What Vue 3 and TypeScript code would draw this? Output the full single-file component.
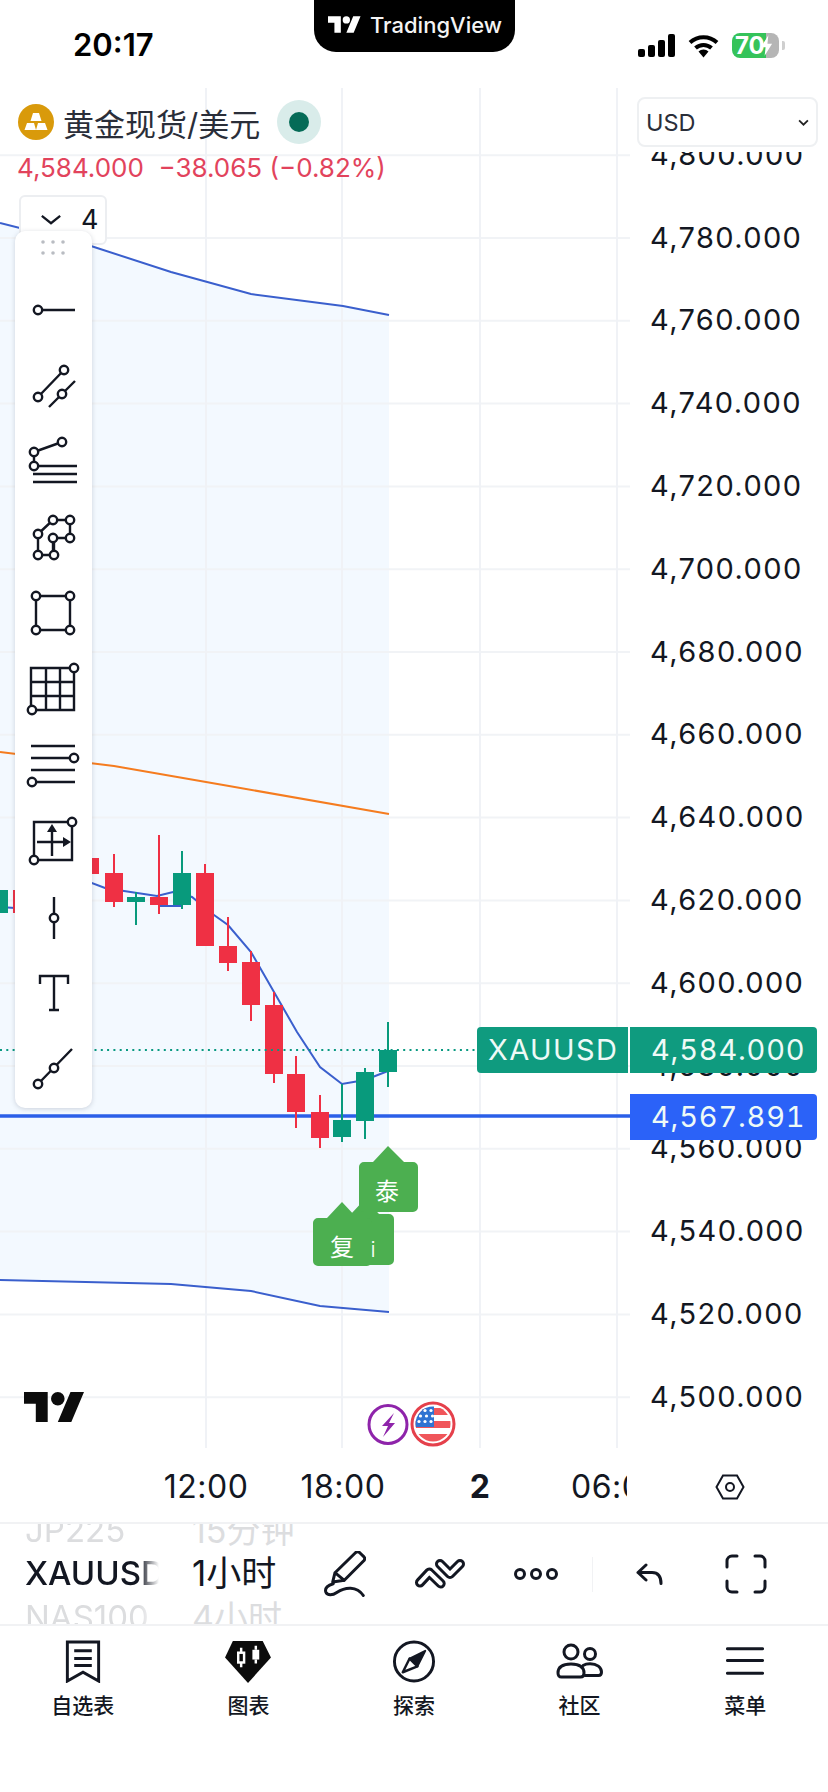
<template>
  <div class="screen">
    <header class="status">
      <span class="status__time">20:17</span>
      <div class="status__pill">
        <svg class="status__logo" viewBox="0 0 36 18"><path d="M14 18H7V7H0V0h14zM28 18h-8L27.500 0h8z" /><circle cx="20" cy="4" r="4" /></svg>
        <span>TradingView</span>
      </div>
      <div class="status__icons">
        <svg class="status__signal" viewBox="0 0 37 24">
          <rect x="0" y="15" width="7" height="8" rx="2" />
          <rect x="10" y="11" width="7" height="12" rx="2" />
          <rect x="20" y="6" width="7" height="17" rx="2" />
          <rect x="30" y="0" width="7" height="23" rx="2" />
        </svg>
        <svg class="status__wifi" viewBox="0 0 31 24">
          <path d="M2 8.500a20 20 0 0 1 27 0M7.500 14a12 12 0 0 1 16 0" fill="none" stroke="#000" stroke-width="4" />
          <path d="M15.500 23.500l-5-6a7.500 7.500 0 0 1 10 0z" />
        </svg>
        <div class="battery">
          <span>70</span>
          <svg class="battery__bolt" viewBox="0 0 14 24"><path d="M9 1L1 14h5l-1 9 8-13H8z" /></svg>
        </div>
        <i class="battery__nub"></i>
      </div>
    </header>

    <section class="chart">
      <div class="chart__main">
        <svg class="plot" viewBox="0 85 828 1363">
          <polygon :points="bandArea" fill="#f3f9ff" />
          <path v-for="y in gridY" :key="y" :d="`M0 ${y}H630`" stroke="#f1f3f6" stroke-width="2" />
          <path v-for="x in gridX" :key="x" :d="`M${x} 88V1448`" stroke="#f0f2f6" stroke-width="2" />
          <polyline :points="upperBand" class="line line--blue" />
          <polyline :points="lowerBand" class="line line--blue" />
          <polyline :points="midBand" class="line line--orange" />
          <polyline :points="average" class="line line--blue" />
          <path d="M160 906H182" class="line line--blue" />
          <path d="M0 1116H630" stroke="#2b5fe8" stroke-width="3.500" />
          <g v-for="c in candles" :key="c.x" :fill="c.color">
            <rect :x="c.x - 1" :y="c.wickTop" width="2" :height="c.wickBottom - c.wickTop" />
            <rect :x="c.x - 9" :y="c.top" width="18" :height="c.bottom - c.top" />
          </g>
          <path d="M0 1050H480" stroke="#089981" stroke-width="2" stroke-dasharray="2 4.300" />

          <path class="marker" d="M365 1199l-14 15h-16a5 5 0 0 0-5 5v41a5 5 0 0 0 5 5h54a5 5 0 0 0 5-5v-41a5 5 0 0 0-5-5h-10z" />
          <path class="marker" d="M342 1202l-15 16h-9a5 5 0 0 0-5 5v38a5 5 0 0 0 5 5h49a5 5 0 0 0 5-5v-38a5 5 0 0 0-5-5h-10z" />
          <path class="marker" d="M388 1146l-15 16h-9a5 5 0 0 0-5 5v40a5 5 0 0 0 5 5h49a5 5 0 0 0 5-5v-40a5 5 0 0 0-5-5h-9z" />
          <text class="marker__text" x="387" y="1200">泰</text>
          <text class="marker__text" x="342" y="1256">复</text>
          <text class="marker__text marker__text--thin" x="373" y="1257">i</text>

          <path class="watermark" d="M47.700 1422H35.800V1403.700H24V1392H47.700zM70.500 1392H84L71.300 1422H57.800z" />
          <circle class="watermark" cx="57.800" cy="1398.700" r="6.800" />

          <circle cx="388" cy="1424.500" r="19" fill="#fff" stroke="#8e24aa" stroke-width="3" />
          <path d="M394 1413l-12 13h6l-5 11 12-14h-6z" fill="#8e24aa" />
          <clipPath id="flag"><circle cx="433" cy="1424" r="17.500" /></clipPath>
          <circle cx="433" cy="1424" r="21" fill="#fff" stroke="#e5404b" stroke-width="3" />
          <g clip-path="url(#flag)">
            <rect x="415" y="1406" width="36" height="36" fill="#fff" />
            <rect x="415" y="1408" width="36" height="7" fill="#f0555a" />
            <rect x="415" y="1421" width="36" height="7" fill="#f0555a" />
            <rect x="415" y="1434" width="36" height="9" fill="#f0555a" />
            <rect x="415" y="1406" width="19" height="21" fill="#2f73d2" />
            <circle v-for="s in flagStars" :key="s.x + '-' + s.y" :cx="s.x" :cy="s.y" r="1.600" fill="#fff" />
          </g>
        </svg>

        <div class="legend">
          <div class="legend__title">
            <svg class="legend__coin" viewBox="0 0 36 36">
              <circle cx="18" cy="18" r="18" fill="#d99a0b" />
              <path d="M15 9h6l2.500 8h-11zM9 19h7l2 7H6.500zM20 19h7l2.500 7H18z" fill="#fff" />
            </svg>
            <span class="legend__name">黄金现货/美元</span>
            <span class="legend__dot"><i></i></span>
          </div>
          <div class="legend__quote">4,584.000&nbsp;&nbsp;−38.065 (−0.82%)</div>
        </div>

        <button class="collapse">
          <svg viewBox="0 0 24 12"><path d="M2 2l10 8 10-8" fill="none" stroke="#131722" stroke-width="2.500" /></svg>
          <span>4</span>
        </button>

        <aside class="tools">
          <svg viewBox="15 231 77 877">
            <g fill="#b9bcc2">
              <template v-for="y in [242, 253]" :key="y">
                <circle cx="43" :cy="y" r="1.800" />
                <circle cx="53" :cy="y" r="1.800" />
                <circle cx="63" :cy="y" r="1.800" />
              </template>
            </g>
            <path class="tools__line" :d="toolLines" />
            <path class="tools__head" d="M52 824l-5 8h10zM71 842l-8-5v10z" />
            <circle v-for="n in toolNodes" :key="n[0] + '-' + n[1]" class="tools__node" :cx="n[0]" :cy="n[1]" r="4.200" />
          </svg>
        </aside>

        <div class="price-axis">
          <span v-for="p in prices" :key="p">{{ p }}</span>
        </div>

        <div class="select">
          <span>USD</span>
          <svg viewBox="0 0 10 6"><path d="M1 1l4 4 4-4" fill="none" stroke="#222" stroke-width="1.600" /></svg>
        </div>

        <div class="tag tag--last">
          <span class="tag__symbol">XAUUSD</span>
          <span class="tag__price">4,584.000</span>
        </div>
        <div class="tag tag--line">
          <span class="tag__price">4,567.891</span>
        </div>
      </div>

      <div class="time-axis">
        <div class="time-axis__labels">
          <span>12:00</span>
          <span>18:00</span>
          <span class="is-bold">2</span>
          <span>06:00</span>
        </div>
        <div class="time-axis__settings">
          <svg viewBox="0 0 30 26"><path d="M8 1.500h14L28.500 13 22 24.500H8L1.500 13z" fill="none" stroke="#131722" stroke-width="2" /><circle cx="15" cy="13" r="4" fill="none" stroke="#131722" stroke-width="2" /></svg>
        </div>
      </div>
    </section>

    <section class="bar">
      <div class="picker picker--symbol">
        <span>JP225</span>
        <span class="is-current">XAUUSD</span>
        <span>NAS100</span>
      </div>
      <div class="picker picker--interval">
        <span>15分钟</span>
        <span class="is-current">1小时</span>
        <span>4小时</span>
      </div>
      <div class="bar__slot">
        <svg width="42" height="46" viewBox="0 0 42 46" class="icon">
          <path d="M11 21.700L31.700 1.500a3 3 0 0 1 3.800 0l4.500 4.300a3 3 0 0 1 0 3.700L20.300 29.300 8.700 31zM11 21.700l9.300 7.600" />
          <path d="M9.300 32.700C4 34 .5 37 1.800 41c1.500 4 7 3.300 11 .5 8-5.500 20-7 26.500 3" />
        </svg>
      </div>
      <div class="bar__slot">
        <svg width="50" height="30" viewBox="0 0 50 30">
          <path d="M5 23.500l9.300-10 11.400 11M25 5l10 10L45 5" fill="none" stroke="#131722" stroke-width="10" stroke-linecap="round" stroke-linejoin="round" />
          <path d="M5 23.500l9.300-10 11.400 11M25 5l10 10L45 5" fill="none" stroke="#fff" stroke-width="4" stroke-linecap="round" stroke-linejoin="round" />
        </svg>
      </div>
      <div class="bar__slot">
        <svg width="44" height="14" viewBox="0 0 44 14" class="icon">
          <circle cx="6" cy="7" r="4.500" /><circle cx="22" cy="7" r="4.500" /><circle cx="38" cy="7" r="4.500" />
        </svg>
      </div>
      <i class="bar__divider"></i>
      <div class="bar__slot">
        <svg width="28" height="22" viewBox="0 0 28 22" class="icon">
          <path d="M10 2L2 9.500l8 7.500M2 9.500h14c6 0 9 4 9 11" />
        </svg>
      </div>
      <div class="bar__slot">
        <svg width="42" height="40" viewBox="0 0 42 40" class="icon">
          <path d="M2 13V7a5 5 0 0 1 5-5h5M30 2h5a5 5 0 0 1 5 5v6M40 27v6a5 5 0 0 1-5 5h-5M12 38H7a5 5 0 0 1-5-5v-6" />
        </svg>
      </div>
    </section>

    <nav class="tabs">
      <a class="tab">
        <svg width="36" height="44" viewBox="0 0 36 44" class="icon icon--sharp">
          <path d="M2 2h32v40l-16-9-16 9zM9 11h18M9 19h18M9 26h18" />
        </svg>
        <span>自选表</span>
      </a>
      <a class="tab">
        <svg width="48" height="44" viewBox="0 0 48 44">
          <path d="M8.500 1H39l8.500 17L24 44 .500 18z" fill="#0c0c0c" />
          <path d="M17 8v5M17 23v5M32 6v4M32 20v4" stroke="#fff" stroke-width="2.500" />
          <rect x="14" y="13" width="6" height="10" fill="none" stroke="#fff" stroke-width="2.500" />
          <rect x="28.500" y="10" width="7" height="10" fill="#fff" />
        </svg>
        <span>图表</span>
      </a>
      <a class="tab">
        <svg width="44" height="44" viewBox="0 0 44 44">
          <circle cx="22" cy="22" r="20" fill="none" stroke="#131722" stroke-width="3" />
          <path d="M33.500 11L17.500 19l8 8z" fill="#131722" stroke="#131722" stroke-width="2" stroke-linejoin="round" />
          <path d="M10.500 33l7-14 8 8z" fill="#fff" stroke="#131722" stroke-width="2.500" stroke-linejoin="round" />
        </svg>
        <span>探索</span>
      </a>
      <a class="tab">
        <svg width="48" height="37" viewBox="0 0 48 37" class="icon">
          <circle cx="15" cy="9" r="7" /><circle cx="34" cy="11" r="5.500" />
          <path d="M2 30C2 24 7 21 15 21s13 3 13 9c0 2.500-1.200 4-3.500 4H5.500C3.200 34 2 32.500 2 30z" />
          <path d="M27 22.500c2-1.200 4.500-1.700 7-1.700 7 0 11.500 3.500 11.500 8.200 0 2.200-1 3.500-3 3.500H29" />
        </svg>
        <span>社区</span>
      </a>
      <a class="tab">
        <svg width="38" height="44" viewBox="0 0 38 44" class="icon">
          <path d="M1 9h36M1 21h36M1 34h36" />
        </svg>
        <span>菜单</span>
      </a>
    </nav>
  </div>
</template>

<script setup lang="ts">
interface Candle {
  x: number;
  top: number;
  bottom: number;
  wickTop: number;
  wickBottom: number;
  color: string;
}

const RED = '#ef3044';
const GREEN = '#089a7c';

const prices = [
  '4,800.000', '4,780.000', '4,760.000', '4,740.000', '4,720.000', '4,700.000', '4,680.000', '4,660.000',
  '4,640.000', '4,620.000', '4,600.000', '4,580.000', '4,560.000', '4,540.000', '4,520.000', '4,500.000',
];

const gridX = [206, 342, 480, 617];
const gridY = prices.map((_, i) => 155.2 + i * 82.8);

const upperBand = '0,223 91,246 171,272 251,294 343,306 389,315';
const lowerBand = '0,1280 171,1284 251,1291 320,1306 389,1312';
const midBand = '0,752 114,766 229,786 389,814';
const bandArea = `${upperBand} 389,1312 320,1306 251,1291 171,1284 0,1280`;

// center x, body top/bottom and wick top/bottom in page pixels
const raw: [number, number, number, number, number, string][] = [
  [-1, 890, 913, 884, 918, GREEN],
  [22, 890, 913, 880, 916, RED],
  [90, 858, 874, 850, 880, RED],
  [114, 873, 902, 854, 907, RED],
  [136, 897, 902, 892, 925, GREEN],
  [159, 897, 905, 835, 914, RED],
  [182, 873, 905, 851, 909, GREEN],
  [205, 873, 946, 864, 946, RED],
  [228, 946, 963, 917, 971, RED],
  [251, 962, 1005, 951, 1021, RED],
  [274, 1005, 1074, 992, 1083, RED],
  [296, 1074, 1112, 1056, 1128, RED],
  [320, 1112, 1138, 1095, 1148, RED],
  [342, 1120, 1137, 1084, 1142, GREEN],
  [365, 1072, 1121, 1068, 1139, GREEN],
  [388, 1050, 1072, 1022, 1087, GREEN],
];

const candles: Candle[] = raw.map(([x, top, bottom, wickTop, wickBottom, color]) => ({
  x, top, bottom, wickTop, wickBottom, color,
}));

const average = '0,907 15,908 92,883 105,888 124,891 157,896 173,892 192,897 214,915 228,925 251,952 274,992 297,1032 320,1067 342,1084 365,1080 388,1071';

const flagStars = [1, 2, 3].flatMap((r) =>
  [0, 1, 2].map((c) => ({ x: 419 + c * 6 + (r % 2 ? 0 : 1.500), y: 1405 + r * 5.500 })),
);

const toolLines = [
  'M38 310H75',
  'M38 397L64 370M49 407L75 381',
  'M34 452L62 442M34 452V466M33 466H77M33 474H77M33 482H77',
  'M38 534L53 520H70V538H53V555H38V534M53 555H54V538',
  'M36 596H70V630H36Z',
  'M31 668H74V710H31ZM46 668V710M60 668V710M31 682H74M31 696H74',
  'M31 746H75M31 758H75M31 770H75M31 782H75',
  'M34 822H72V860H34ZM52 830V856M37 842H65',
  'M54 897V939',
  'M40 984V976H68V984M54 976V1010M49 1010H59',
  'M38 1084L72 1049',
].join('');

const toolNodes = [
  [38, 310],
  [38, 397], [64, 370], [62, 394],
  [62, 442], [34, 452], [34, 466],
  [53, 520], [70, 520], [38, 534], [53, 538], [70, 538], [38, 555], [54, 555],
  [36, 596], [70, 596], [36, 630], [70, 630],
  [74, 668], [32, 710],
  [74, 758], [32, 782],
  [72, 822], [34, 860],
  [54, 918],
  [38, 1084], [54, 1068],
];
</script>

<style scoped>
.screen {
  width: 828px;
  height: 1792px;
  display: flex;
  flex-direction: column;
  background: #fff;
  color: #131722;
  font-family: Inter, "Noto Sans CJK SC", sans-serif;
  overflow: hidden;
}

.status {
  position: relative;
  height: 85px;
  flex: none;
  display: flex;
  justify-content: space-between;
  align-items: flex-start;
  padding: 26px 43px 0 73px;
  box-sizing: border-box;
}

.status__time {
  font-size: 31px;
  font-weight: 600;
  line-height: 38px;
  color: #000;
}

.status__pill {
  position: absolute;
  top: 0;
  left: 314px;
  width: 201px;
  height: 52px;
  box-sizing: border-box;
  padding: 0 0 0 14px;
  display: flex;
  align-items: flex-start;
  gap: 9px;
  background: #000;
  border-radius: 0 0 22px 22px;
  color: #f4f4f4;
  font-size: 22px;
  font-weight: 500;
  white-space: nowrap;
}

.status__logo {
  width: 33px;
  height: 17px;
  margin-top: 16px;
  fill: #fff;
}

.status__pill span {
  line-height: 51px;
}

.status__icons {
  display: flex;
  align-items: center;
  gap: 13px;
  margin-top: 7px;
}

.status__signal {
  width: 37px;
  height: 24px;
}

.status__wifi {
  width: 31px;
  height: 24px;
}

.battery {
  position: relative;
  width: 47px;
  height: 25px;
  border-radius: 8px;
  background: linear-gradient(90deg, #35c35a 72%, #b5b5b5 72%);
  color: #fff;
  font-size: 24px;
  font-weight: 700;
  line-height: 25px;
  padding-left: 3px;
  box-sizing: border-box;
  overflow: hidden;
  white-space: nowrap;
}

.battery__bolt {
  position: absolute;
  top: 1px;
  right: 6px;
  width: 13px;
  height: 23px;
  fill: #fff;
}

.battery__nub {
  width: 3px;
  height: 9px;
  margin-left: -10px;
  background: #cfcfcf;
  border-radius: 0 2px 2px 0;
}

.chart {
  flex: none;
  height: 1437px;
  display: flex;
  flex-direction: column;
}

.chart__main {
  position: relative;
  flex: none;
  height: 1363px;
  overflow: hidden;
}

.plot {
  position: absolute;
  inset: 0;
  width: 828px;
  height: 1363px;
}

.line {
  fill: none;
  stroke-width: 2;
}

.line--blue {
  stroke: #3a5fcd;
}

.line--orange {
  stroke: #f57c1f;
}

.marker {
  fill: #4caf50;
}

.marker__text {
  fill: #fff;
  font-size: 24px;
  text-anchor: middle;
}

.marker__text--thin {
  font-size: 22px;
  font-weight: 300;
}

.watermark {
  fill: #0c0c0c;
}

.legend {
  position: absolute;
  top: 15px;
  left: 18px;
}

.legend__title {
  display: flex;
  align-items: center;
  height: 44px;
}

.legend__coin {
  width: 36px;
  height: 36px;
}

.legend__name {
  margin-left: 9px;
  font-size: 31px;
  color: #2a2e39;
  white-space: nowrap;
  width: 214px;
}

.legend__dot {
  width: 44px;
  height: 44px;
  border-radius: 50%;
  background: #d9ecea;
  display: flex;
  align-items: center;
  justify-content: center;
}

.legend__dot i {
  width: 20px;
  height: 20px;
  border-radius: 50%;
  background: #056b57;
}

.legend__quote {
  margin: 4px 0 0 -1px;
  font-size: 26px;
  line-height: 40px;
  color: #e2435c;
  white-space: nowrap;
}

.collapse {
  position: absolute;
  top: 110px;
  left: 19px;
  width: 88px;
  height: 50px;
  display: flex;
  align-items: flex-start;
  gap: 19px;
  padding: 11px 0 0 19px;
  box-sizing: border-box;
  background: #fff;
  border: 2px solid #eceef1;
  border-radius: 6px;
  font-family: inherit;
  font-size: 27px;
  line-height: 24px;
  color: #131722;
}

.collapse svg {
  width: 22px;
  height: 11px;
  margin-top: 6px;
}

.tools {
  position: absolute;
  top: 146px;
  left: 15px;
  width: 77px;
  height: 877px;
  background: #fff;
  border-radius: 10px;
  box-shadow: 0 1px 5px rgba(60, 70, 90, 0.22);
}

.tools svg {
  display: block;
  width: 77px;
  height: 877px;
}

.tools__line {
  fill: none;
  stroke: #131722;
  stroke-width: 2.400;
}

.tools__head {
  fill: #131722;
}

.tools__node {
  fill: #fff;
  stroke: #131722;
  stroke-width: 2.400;
}

.price-axis {
  position: absolute;
  top: 28.800px;
  left: 630px;
  right: 0;
  display: flex;
  flex-direction: column;
  padding-left: 20px;
  font-size: 29px;
  letter-spacing: 1.400px;
  color: #131722;
}

.price-axis span {
  height: 82.800px;
  line-height: 82.800px;
}

.select {
  position: absolute;
  top: 12px;
  left: 637px;
  width: 181px;
  height: 50px;
  box-sizing: border-box;
  padding: 0 7px;
  display: flex;
  align-items: center;
  justify-content: space-between;
  background: #fff;
  border: 2px solid #eef0f2;
  border-radius: 8px;
  box-shadow: 0 5px 0 #fff;
  font-size: 23.500px;
  color: #2a2e39;
}

.select svg {
  width: 11px;
  height: 7px;
}

.tag {
  position: absolute;
  display: flex;
  height: 46px;
  color: #eefaf7;
  font-size: 29px;
  line-height: 46px;
}

.tag--last {
  top: 942px;
  left: 477px;
  gap: 2px;
}

.tag--line {
  top: 1009px;
  left: 630px;
}

.tag__symbol {
  width: 151px;
  box-sizing: border-box;
  padding-left: 11px;
  letter-spacing: 1.400px;
  background: #0f9b7f;
  border-radius: 4px 0 0 4px;
}

.tag__price {
  width: 187px;
  box-sizing: border-box;
  padding-left: 21px;
  letter-spacing: 0.800px;
  font-variant-numeric: tabular-nums;
  background: #0f9b7f;
  border-radius: 0 4px 4px 0;
}

.tag--line .tag__price {
  background: #2b62f8;
}

.time-axis {
  flex: none;
  height: 74px;
  display: flex;
  font-size: 32px;
  letter-spacing: 0.500px;
  line-height: 78px;
}

.time-axis__labels {
  width: 627px;
  box-sizing: border-box;
  padding-left: 137.500px;
  display: flex;
  overflow: hidden;
}

.time-axis__labels span {
  flex: 0 0 137px;
  text-align: center;
}

.time-axis__labels .is-bold {
  font-weight: 700;
}

.time-axis__settings {
  flex: 1;
  display: flex;
  align-items: center;
  justify-content: flex-start;
  padding: 4px 0 0 88px;
}

.time-axis__settings svg {
  width: 30px;
  height: 26px;
}

.bar {
  flex: none;
  height: 104px;
  display: flex;
  align-items: center;
  padding-left: 25px;
  box-sizing: border-box;
  border-top: 2px solid #f1f2f4;
  border-bottom: 2px solid #f1f2f4;
}

.picker {
  height: 100px;
  display: flex;
  flex-direction: column;
  justify-content: center;
  overflow: hidden;
  font-size: 33px;
  color: #dcdddf;
  white-space: nowrap;
}

.picker span {
  flex: 0 0 43.500px;
  line-height: 43.500px;
}

.picker .is-current {
  font-size: 33px;
  font-weight: 500;
  color: #131722;
}

.picker--symbol {
  width: 134px;
  margin-right: 33px;
  -webkit-mask-image: linear-gradient(90deg, #000 85%, transparent 100%);
  mask-image: linear-gradient(90deg, #000 85%, transparent 100%);
}

.picker--interval {
  width: 105px;
  font-size: 34px;
}

.picker--interval .is-current {
  font-size: 35px;
  font-weight: 400;
}

.bar__slot {
  width: 95.500px;
  display: flex;
  justify-content: center;
}

.bar__divider {
  width: 1px;
  height: 35px;
  margin: 0 10px 0 8px;
  background: #f1f2f4;
}

.icon {
  fill: none;
  stroke: #131722;
  stroke-width: 3;
  stroke-linecap: round;
  stroke-linejoin: round;
}

.icon--sharp {
  stroke-linecap: butt;
  stroke-linejoin: miter;
}

.tabs {
  flex: none;
  display: grid;
  grid-template-columns: repeat(5, 1fr);
  padding-top: 14px;
}

.tab {
  display: flex;
  flex-direction: column;
  align-items: center;
  height: 80px;
  font-size: 21px;
  font-weight: 500;
  color: #131722;
}

.tab svg {
  height: 46px;
}

.tab span {
  margin-top: 9px;
  line-height: 28px;
}
</style>

<style>
html,
body {
  margin: 0;
  background: #fff;
}
</style>
